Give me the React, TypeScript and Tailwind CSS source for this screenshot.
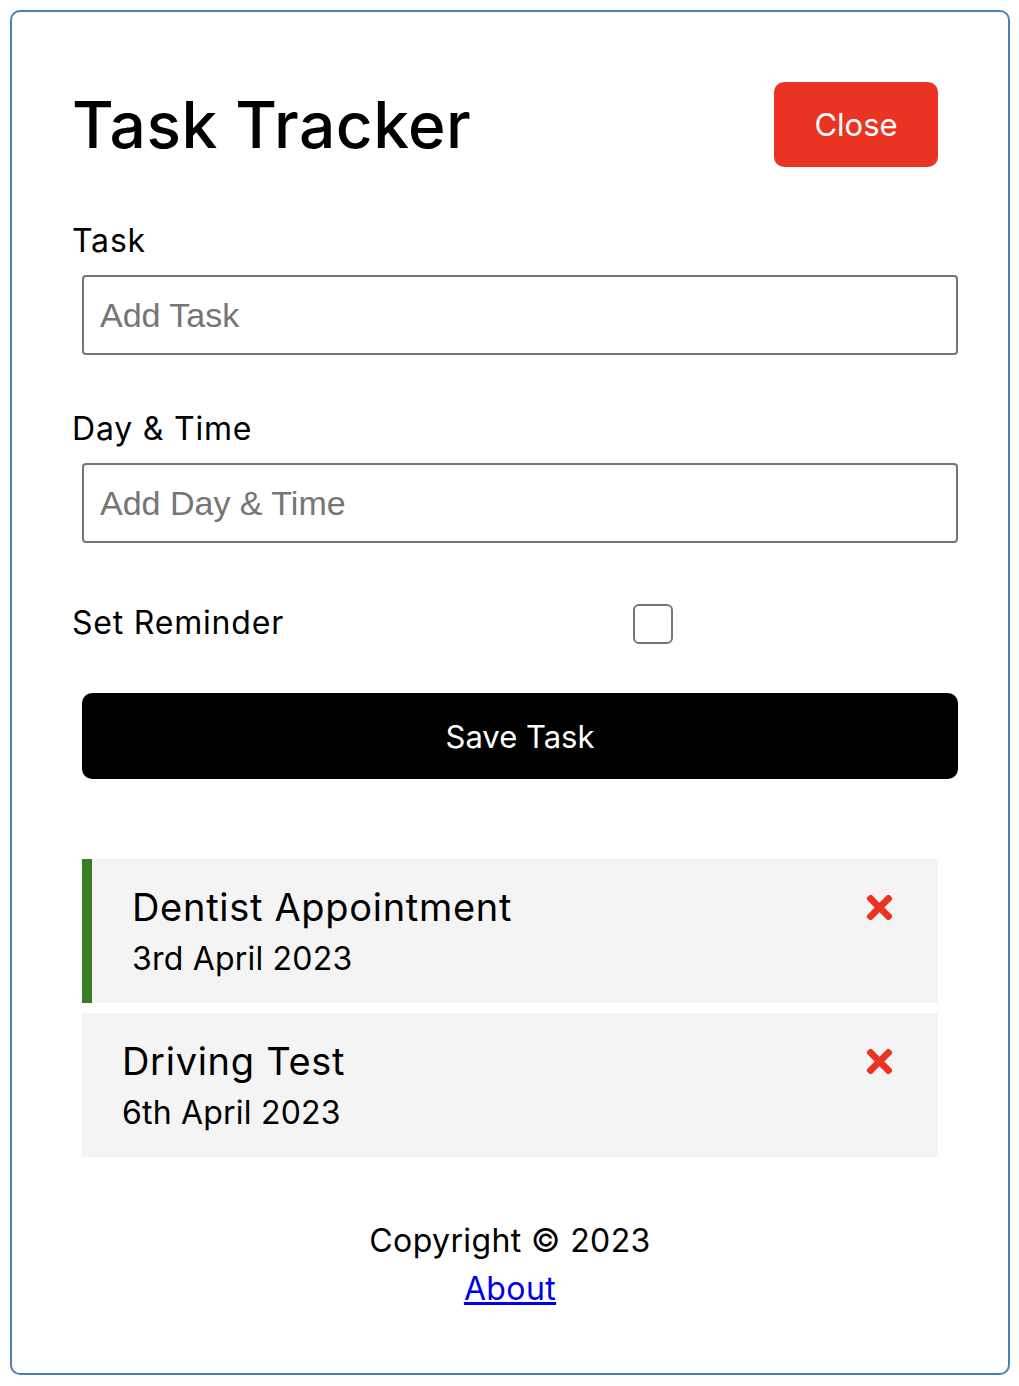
import React from "react";
import { FaTimes } from "react-icons/fa";

const tasks = [
  { id: 1, text: "Dentist Appointment", day: "3rd April 2023", reminder: true },
  { id: 2, text: "Driving Test", day: "6th April 2023", reminder: false },
];

export default function App() {
  return (
    <div
      className="ml-[10px] mt-[10px] w-[1000px] rounded-[10px] border-2 border-[#4f80b3] bg-white p-[60px] text-black"
      style={{ fontFamily: "Inter, 'Noto Sans', sans-serif" }}
    >
      <header className="mb-[40px] flex items-center justify-between">
        <h1 className="text-[64px] font-medium leading-[96px] tracking-[0.5px]">Task Tracker</h1>
        <button className="m-[10px] h-[85px] w-[164px] rounded-[10px] bg-[#ea3323] text-[31px] leading-[45px] text-white">
          Close
        </button>
      </header>

      <form className="mb-[80px]">
        <div>
          <label className="block text-[32px] leading-[48px] tracking-[0.8px]">Task</label>
          <input
            type="text"
            placeholder="Add Task"
            className="mx-[10px] mt-[10px] block h-[80px] w-[876px] rounded-[4px] border-2 border-[#767676] px-[16px] text-[34px] placeholder:text-[#757575]"
            style={{ fontFamily: "'Liberation Sans', Arial, sans-serif" }}
          />
        </div>
        <div className="mt-[50px]">
          <label className="block text-[32px] leading-[48px] tracking-[0.8px]">Day &amp; Time</label>
          <input
            type="text"
            placeholder="Add Day & Time"
            className="mx-[10px] mt-[10px] block h-[80px] w-[876px] rounded-[4px] border-2 border-[#767676] px-[16px] text-[34px] placeholder:text-[#757575]"
            style={{ fontFamily: "'Liberation Sans', Arial, sans-serif" }}
          />
        </div>
        <div className="mt-[50px] flex h-[60px] items-center">
          <label className="flex-1 text-[32px] leading-[48px] tracking-[0.8px]">Set Reminder</label>
          <div className="mx-[10px] flex h-[40px] flex-[2] justify-center">
            <input
              type="checkbox"
              className="mt-[1px] h-[40px] w-[40px] appearance-none rounded-[6px] border-2 border-[#767676] bg-white"
            />
          </div>
        </div>
        <button
          type="button"
          className="mx-[10px] mt-[40px] block h-[86px] w-[876px] rounded-[10px] bg-black text-[31px] leading-[45px] text-white"
        >
          Save Task
        </button>
      </form>

      <div className="flex flex-col gap-[10px]">
        {tasks.map((t) => (
          <div
            key={t.id}
            className={`mx-[10px] h-[144px] bg-[#f4f4f4] px-[40px] py-[20px] ${
              t.reminder ? "border-l-[10px] border-[#377d22]" : ""
            }`}
          >
            <h3 className="flex items-center justify-between text-[38px] font-normal leading-[56px] tracking-[0.7px]">
              {t.text}
              <FaTimes className="text-[#ea3323]" size={37} />
            </h3>
            <p className="text-[32px] leading-[48px] tracking-[0.2px]">{t.day}</p>
          </div>
        ))}
      </div>

      <footer className="mt-[60px] text-center text-[32px] leading-[48px] tracking-[0.4px]">
        <p>Copyright &copy; 2023</p>
        <a href="#" className="text-[#0000ee] underline">
          About
        </a>
      </footer>
    </div>
  );
}
